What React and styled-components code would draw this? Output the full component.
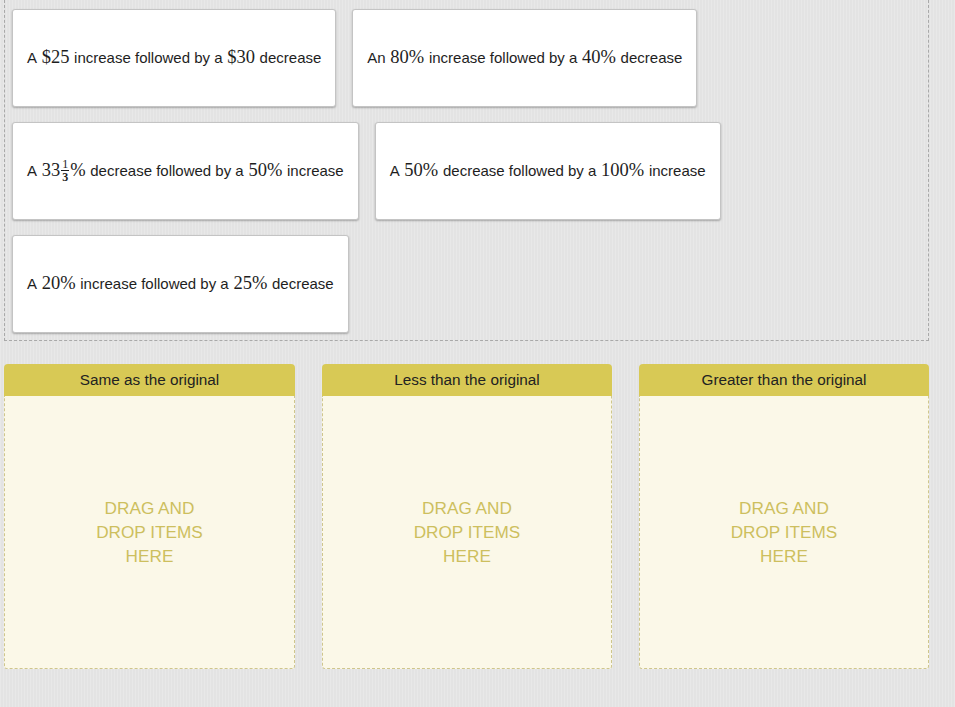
import React from "react";
import styled, { createGlobalStyle } from "styled-components";

const Global = createGlobalStyle`
  html, body { margin: 0; padding: 0; }
  body {
    background-color: #e3e3e3;
    background-image: repeating-linear-gradient(90deg, rgba(255,255,255,0.18) 0 1px, rgba(0,0,0,0) 1px 3px);
    font-family: "Liberation Sans", Arial, sans-serif;
    width: 955px;
    min-height: 707px;
  }
`;

const Page = styled.div`
  padding: 0 26px 0 4px;
  display: flex;
  flex-direction: column;
  gap: 23px;
`;

const Pool = styled.div`
  border: 1px dashed #a9a9a9;
  border-top: none;
  padding: 9px 7px 7px;
  display: flex;
  flex-wrap: wrap;
  gap: 15px 16px;
  box-sizing: border-box;
  align-content: flex-start;
`;

const Card = styled.div`
  height: 98px;
  box-sizing: border-box;
  padding: 0 14px 1px;
  background: #fff;
  border: 1px solid #c4c4c4;
  border-radius: 3px;
  box-shadow: 0 1px 2px rgba(0, 0, 0, 0.28);
  display: flex;
  align-items: center;
  font-size: 15px;
  color: #1e1e1e;
  white-space: nowrap;
`;

const M = styled.span`
  font-family: "Liberation Serif", "Times New Roman", serif;
  font-size: 18.5px;
  margin: 0 0.5px;
`;

const Frac = styled.span`
  display: inline-flex;
  flex-direction: column;
  align-items: center;
  font-family: "Liberation Serif", serif;
  font-size: 12px;
  line-height: 10px;
  vertical-align: -4px;
  margin: 0 1px;
`;

const Num = styled.span`
  border-bottom: 1px solid #1e1e1e;
  padding: 0 1px 1px;
`;

const Den = styled.span`
  padding-top: 1px;
  font-weight: bold;
`;

const Zones = styled.div`
  display: grid;
  grid-template-columns: 291px 290px 290px;
  column-gap: 27px;
`;

const Zone = styled.div`
  display: flex;
  flex-direction: column;
  height: 305px;
`;

const ZoneHead = styled.div`
  height: 32px;
  background: #d8c955;
  border-radius: 4px 4px 0 0;
  display: flex;
  align-items: center;
  justify-content: center;
  font-size: 15.3px;
  color: #222;
`;

const ZoneBody = styled.div`
  flex: 1;
  background: #fbf8e8;
  border: 1px dashed #cfc68c;
  border-top: none;
  border-radius: 0 0 3px 3px;
  display: flex;
  align-items: center;
  justify-content: center;
`;

const DropText = styled.div`
  width: 124px;
  text-align: center;
  font-size: 17.2px;
  line-height: 24px;
  color: #cdbf5e;
`;

const Pct = ({ v }) => <M>{v}%</M>;

export default function App() {
  const zones = ["Same as the original", "Less than the original", "Greater than the original"];
  return (
    <>
      <Global />
      <Page>
        <Pool>
          <Card>A&nbsp;<M>$25</M>&nbsp;increase followed by a&nbsp;<M>$30</M>&nbsp;decrease</Card>
          <Card>An&nbsp;<Pct v="80" />&nbsp;increase followed by a&nbsp;<Pct v="40" />&nbsp;decrease</Card>
          <Card>
            A&nbsp;<M style={{ marginRight: 0 }}>33</M>
            <Frac><Num>1</Num><Den>3</Den></Frac>
            <M style={{ marginLeft: 0 }}>%</M>&nbsp;decrease followed by a&nbsp;<Pct v="50" />&nbsp;increase
          </Card>
          <Card>A&nbsp;<Pct v="50" />&nbsp;decrease followed by a&nbsp;<Pct v="100" />&nbsp;increase</Card>
          <Card>A&nbsp;<Pct v="20" />&nbsp;increase followed by a&nbsp;<Pct v="25" />&nbsp;decrease</Card>
        </Pool>
        <Zones>
          {zones.map((z) => (
            <Zone key={z}>
              <ZoneHead>{z}</ZoneHead>
              <ZoneBody>
                <DropText>DRAG AND DROP ITEMS HERE</DropText>
              </ZoneBody>
            </Zone>
          ))}
        </Zones>
      </Page>
    </>
  );
}
